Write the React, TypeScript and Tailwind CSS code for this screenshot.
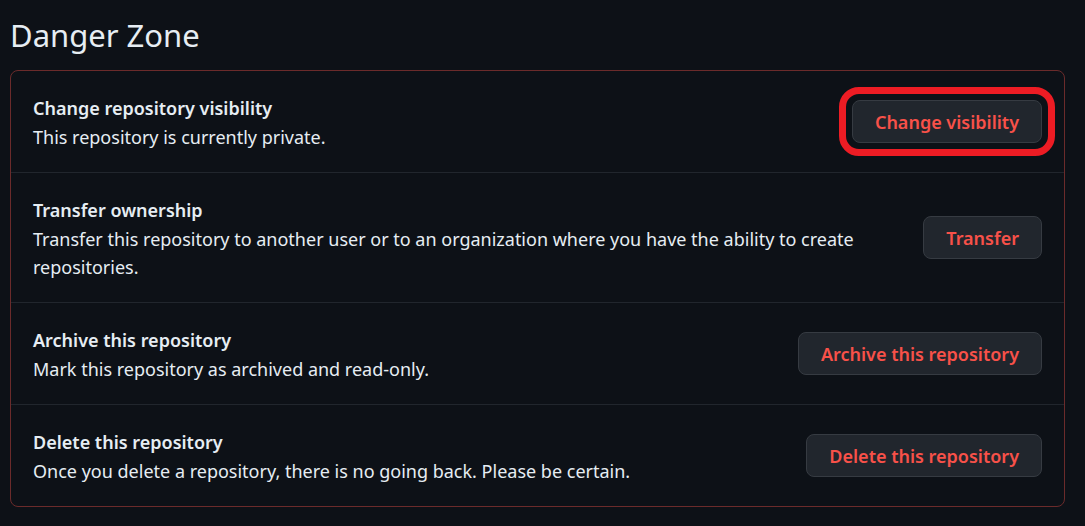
const rows = [
  {
    title: 'Change repository visibility',
    description: 'This repository is currently private.',
    action: 'Change visibility',
    highlighted: true,
  },
  {
    title: 'Transfer ownership',
    description:
      'Transfer this repository to another user or to an organization where you have the ability to create repositories.',
    action: 'Transfer',
  },
  {
    title: 'Archive this repository',
    description: 'Mark this repository as archived and read-only.',
    action: 'Archive this repository',
  },
  {
    title: 'Delete this repository',
    description: 'Once you delete a repository, there is no going back. Please be certain.',
    action: 'Delete this repository',
  },
]

function DangerButton({ label, highlighted }: { label: string; highlighted?: boolean }) {
  return (
    <div className="relative shrink-0 mb-[2px]">
      {/* annotation ring drawn over the screenshot */}
      {highlighted && (
        <div className="absolute -inset-[13px] border-[7px] border-[#ed1c24] rounded-[20px] pointer-events-none" />
      )}
      <button className="h-[43px] px-[22px] rounded-[8px] border border-[#363b42] bg-[#21262d] text-[#f85149] text-[18px] font-semibold leading-[28px] whitespace-nowrap">
        {label}
      </button>
    </div>
  )
}

export default function App() {
  return (
    <div
      className="min-h-screen bg-[#0d1117] pl-[10px] pr-[20px] text-[#e6edf3]"
      style={{ fontFamily: '"Noto Sans", sans-serif' }}
    >
      <h2 className="pt-[12px] mb-[11px] text-[31px] leading-[47px] font-normal">Danger Zone</h2>

      {/* Danger box */}
      <div className="border border-[#6b2b2b] rounded-[8px]">
        {rows.map((row, index) => (
          <div
            key={row.title}
            className={`flex items-center gap-[16px] px-[22px] pt-[23px] pb-[21px] ${
              index > 0 ? 'border-t border-[#21262d]' : ''
            }`}
          >
            <div className="flex-auto text-[18px] leading-[28px]">
              <div className="font-semibold mb-[1px]">{row.title}</div>
              <div>{row.description}</div>
            </div>
            <DangerButton label={row.action} highlighted={row.highlighted} />
          </div>
        ))}
      </div>
    </div>
  )
}
